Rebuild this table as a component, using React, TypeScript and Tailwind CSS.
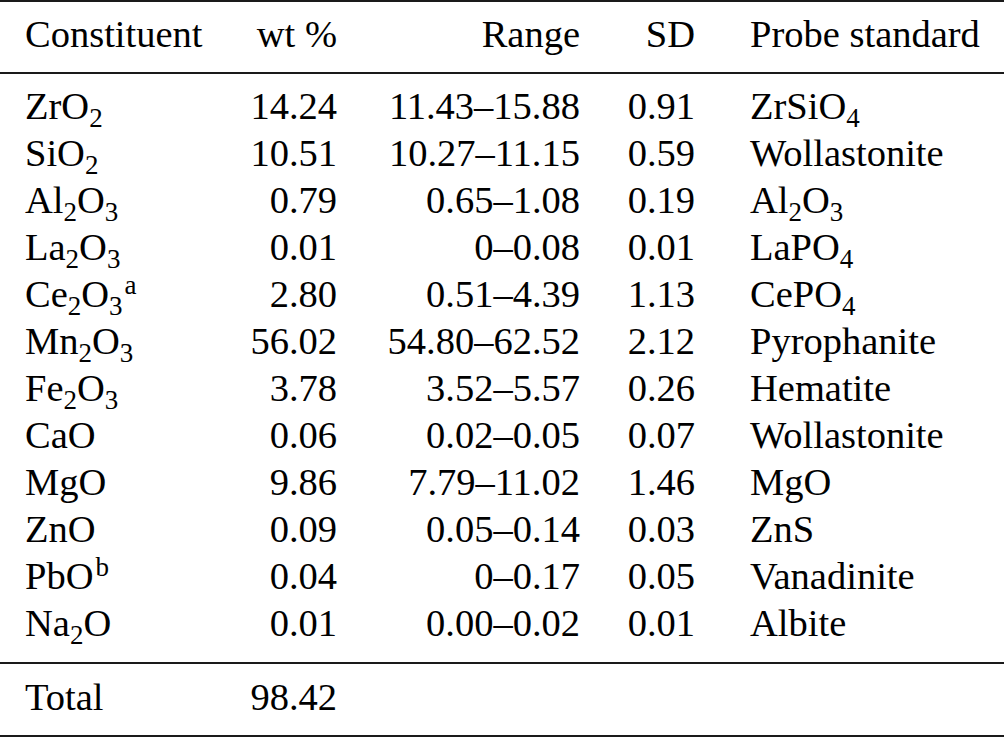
type Row = { name: string; wt: string; range: string; sd: string; std: string }

const rows: Row[] = [
  { name: 'ZrO_2', wt: '14.24', range: '11.43–15.88', sd: '0.91', std: 'ZrSiO_4' },
  { name: 'SiO_2', wt: '10.51', range: '10.27–11.15', sd: '0.59', std: 'Wollastonite' },
  { name: 'Al_2O_3', wt: '0.79', range: '0.65–1.08', sd: '0.19', std: 'Al_2O_3' },
  { name: 'La_2O_3', wt: '0.01', range: '0–0.08', sd: '0.01', std: 'LaPO_4' },
  { name: 'Ce_2O_3^a', wt: '2.80', range: '0.51–4.39', sd: '1.13', std: 'CePO_4' },
  { name: 'Mn_2O_3', wt: '56.02', range: '54.80–62.52', sd: '2.12', std: 'Pyrophanite' },
  { name: 'Fe_2O_3', wt: '3.78', range: '3.52–5.57', sd: '0.26', std: 'Hematite' },
  { name: 'CaO', wt: '0.06', range: '0.02–0.05', sd: '0.07', std: 'Wollastonite' },
  { name: 'MgO', wt: '9.86', range: '7.79–11.02', sd: '1.46', std: 'MgO' },
  { name: 'ZnO', wt: '0.09', range: '0.05–0.14', sd: '0.03', std: 'ZnS' },
  { name: 'PbO^b', wt: '0.04', range: '0–0.17', sd: '0.05', std: 'Vanadinite' },
  { name: 'Na_2O', wt: '0.01', range: '0.00–0.02', sd: '0.01', std: 'Albite' },
]

// "Al_2O_3^a" -> Al, sub 2, O, sub 3, sup a
function Formula({ text }: { text: string }) {
  const parts = text.split(/([_^][0-9a-z])/)
  return (
    <>
      {parts.map((p, i) => {
        if (p.startsWith('_'))
          return <span key={i} className="relative top-[8px] text-[27px] leading-[0]">{p[1]}</span>
        if (p.startsWith('^'))
          return <span key={i} className="relative top-[-13px] ml-[2px] text-[27px] leading-[0]">{p[1]}</span>
        return <span key={i}>{p}</span>
      })}
    </>
  )
}

const grid = 'grid grid-cols-[215px_97px_243px_115px_1fr] pl-[25px]'

export default function App() {
  return (
    <div className="w-[1004px] h-[737px] overflow-hidden bg-white font-['Liberation_Serif','Times_New_Roman',serif] text-[38.5px] leading-[47px] text-black">
      <div className="border-t-2 border-b-2 border-[#1a1a1a]">
        <div className={`${grid} pt-[9px] pb-[14px]`}>
          <span>Constituent</span>
          <span className="text-right">wt %</span>
          <span className="text-right">Range</span>
          <span className="text-right">SD</span>
          <span className="pl-[55px]">Probe standard</span>
        </div>

        <div className="border-t-2 border-[#1a1a1a] pt-[9px] pb-[15px]">
          {rows.map((r) => (
            <div key={r.name} className={grid}>
              <span className="whitespace-nowrap"><Formula text={r.name} /></span>
              <span className="text-right">{r.wt}</span>
              <span className="text-right">{r.range}</span>
              <span className="text-right">{r.sd}</span>
              <span className="pl-[55px] whitespace-nowrap"><Formula text={r.std} /></span>
            </div>
          ))}
        </div>

        <div className={`${grid} border-t-2 border-[#1a1a1a] pt-[10px] pb-[14px]`}>
          <span>Total</span>
          <span className="text-right">98.42</span>
          <span />
          <span />
          <span />
        </div>
      </div>
    </div>
  )
}
